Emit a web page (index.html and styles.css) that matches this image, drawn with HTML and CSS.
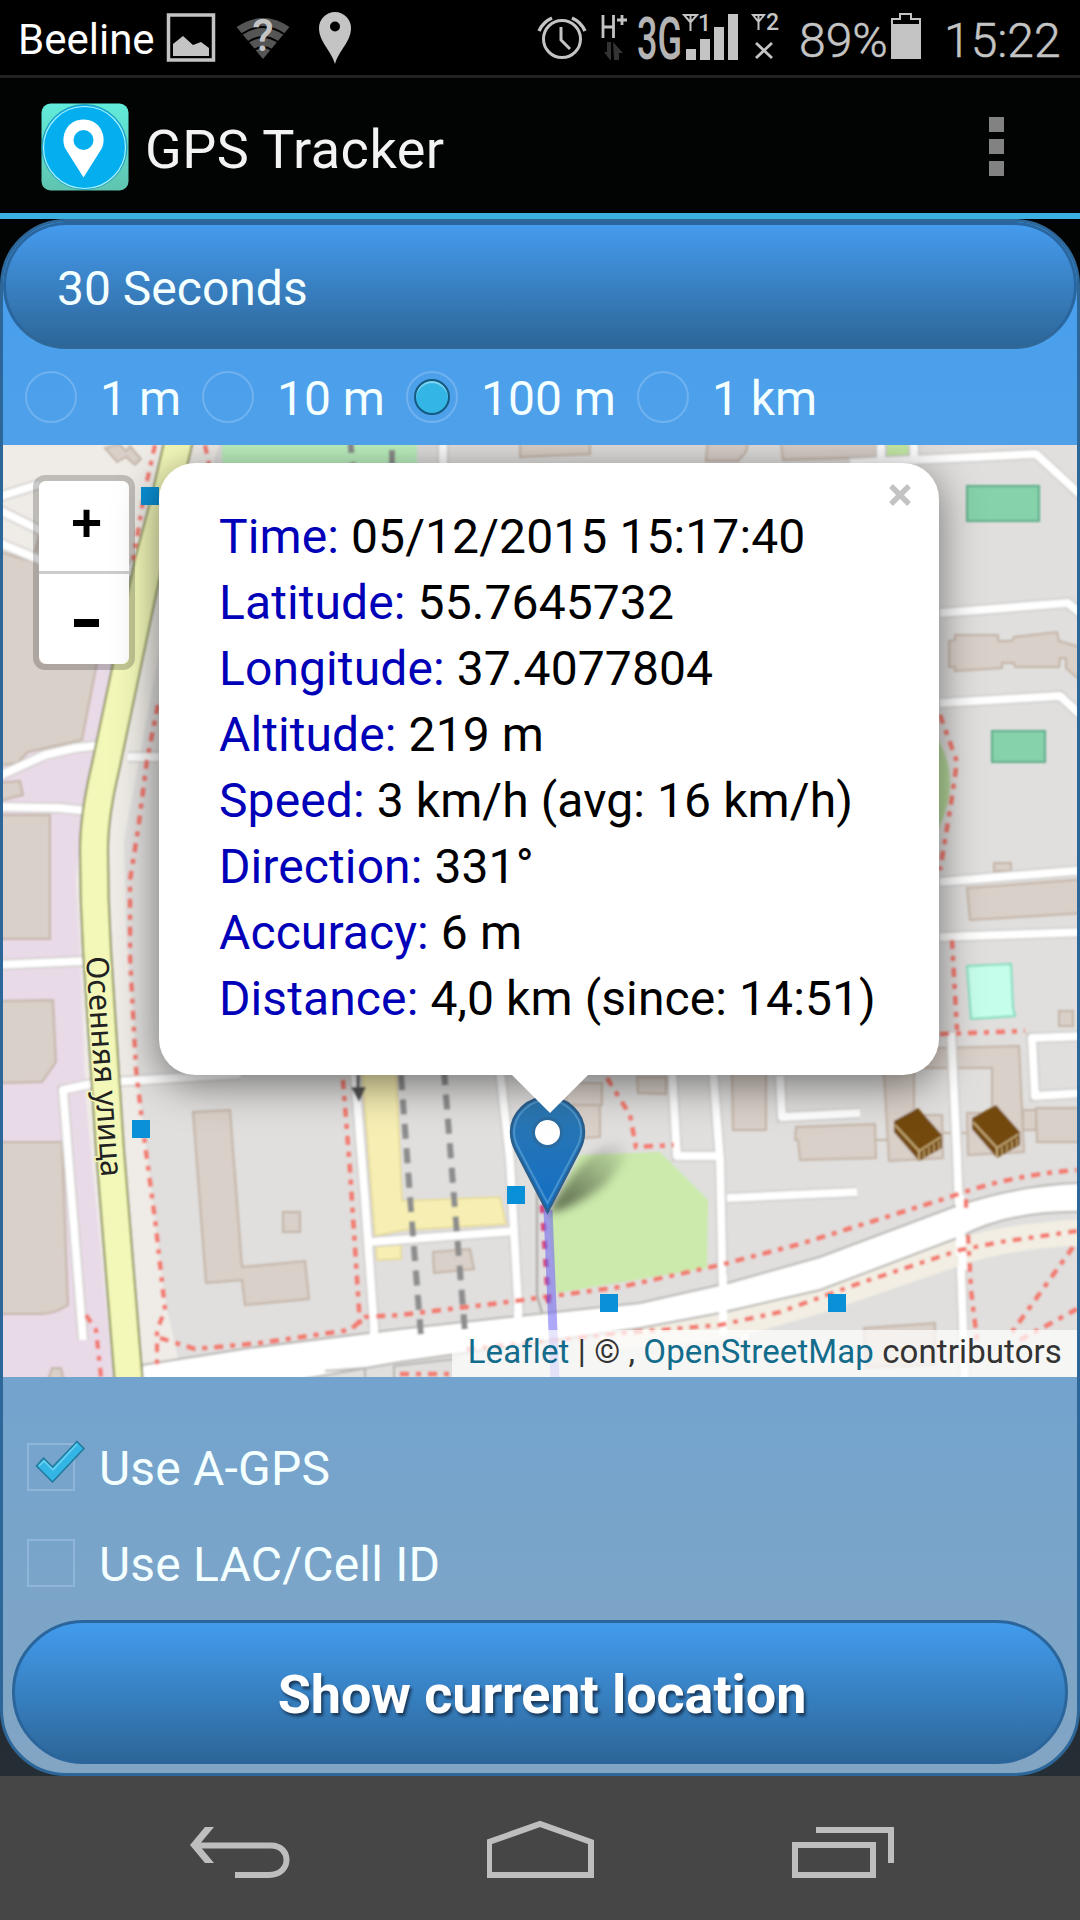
FILE: index.html
```html
<!DOCTYPE html>
<html lang="en">
<head>
    <meta charset="UTF-8">
    <meta name="viewport" content="width=device-width, initial-scale=1.0">
    <title>GPS Tracker</title>
    <link rel="stylesheet" href="styles.css">
</head>
<body>
    <!-- Status bar -->
    <div class="status-bar">
        <span class="carrier">Beeline</span>
        <svg class="status-left" width="200" height="75" viewBox="160 0 200 75">
            <rect x="168.5" y="15" width="45" height="45" fill="none" stroke="#c4c4c4" stroke-width="3.5"/>
            <path d="M173 56V44l10-8 10 9 8-3 8 6v8z" fill="#c4c4c4"/>
            <path d="M263 59L236.500 27Q263 9 289.500 27z" fill="#555"/>
            <path d="M242 34Q263 20 284 34M248 42Q263 32 278 42M254 50Q263 44 272 50" fill="none" stroke="#000" stroke-width="2"/>
            <text class="wifi-mark" x="263" y="51" text-anchor="middle">?</text>
            <path d="M335 64C331 50 319 42 319 28a16 16 0 0 1 32 0C351 42 339 50 335 64z" fill="#c4c4c4"/>
            <circle cx="335" cy="26.500" r="5" fill="#000"/>
        </svg>
        <svg class="status-right" width="260" height="75" viewBox="530 0 260 75">
            <g fill="none" stroke="#c4c4c4">
                <circle cx="562" cy="39" r="18.500" stroke-width="3"/>
                <path d="M561 27v13l9 9" stroke-width="3"/>
                <path d="M539 31Q543 22 552 18M585 31Q581 22 572 18" stroke-width="3.500"/>
                <path d="M603 15v23M613.500 15v23M603 27h10M617 20h10M622 15v10" stroke-width="2.800"/>
                <path d="M684 15h13l-6.500 7.500zM690.500 15v16M753 15h11l-5.500 7zM758.500 15v15" stroke-width="2"/>
                <path d="M756 43l16 15M772 43l-16 15" stroke-width="2.800"/>
            </g>
            <path d="M604 52h3V42h4v18h-1zM613 42l10 11h-4v7h-5z" fill="#333"/>
            <text class="net" transform="translate(637 59) scale(.6 1)">3G</text>
            <text class="sim" x="698" y="31">1</text>
            <text class="sim" x="766" y="30">2</text>
            <path d="M686 49h10v11h-10zM700 39h10v21h-10zM714 27h10v33h-10zM728 14h10v46h-10z" fill="#c4c4c4"/>
        </svg>
        <span class="battery-level">89%</span>
        <svg class="battery" width="31" height="75" viewBox="891 0 31 75">
            <path d="M892 58V19h8v-5h11v5h9v39z" fill="none" stroke="#c4c4c4" stroke-width="2"/>
            <path d="M891 24h30v35h-30z" fill="#c4c4c4"/>
        </svg>
        <span class="clock">15:22</span>
    </div>

    <!-- App header -->
    <div class="header">
        <svg class="logo" width="88" height="88" viewBox="0 0 88 88">
            <defs>
                <linearGradient id="logoBg" x1="0" y1="0" x2="0" y2="1">
                    <stop offset="0" stop-color="#62ecdb"/>
                    <stop offset="1" stop-color="#5fc4b0"/>
                </linearGradient>
            </defs>
            <rect x="0.500" y="0.500" width="87" height="87" rx="9" fill="url(#logoBg)"/>
            <circle cx="43.500" cy="44" r="42.500" fill="#05aeee" stroke="#2a9fb5" stroke-width="1"/>
            <circle cx="43.500" cy="44.500" r="41" fill="none" stroke="#a9f4ff" stroke-width="1.200"/>
            <path d="M42.500 74.500L24 45C19 33 26 16.500 42.500 16.500S66 33 61 45z" fill="#fff"/>
            <circle cx="42.500" cy="37" r="10" fill="#05aeee"/>
        </svg>
        <h1>GPS Tracker</h1>
        <div class="menu"><i></i><i></i><i></i></div>
    </div>

    <div class="page">
        <div class="select">30 Seconds</div>

        <div class="radios">
            <label><span class="radio"></span>1 m</label>
            <label><span class="radio"></span>10 m</label>
            <label><span class="radio checked"></span>100 m</label>
            <label><span class="radio"></span>1 km</label>
        </div>

        <div class="map">
            <svg class="tiles" width="1074" height="932" viewBox="3 445 1074 932">
                <defs>
                    <linearGradient id="pin" x1="0" y1="0" x2="0" y2="1">
                        <stop offset="0" stop-color="#2e77ae"/>
                        <stop offset="1" stop-color="#126fc6"/>
                    </linearGradient>
                    <linearGradient id="pinShadow" x1="0" y1="1" x2="1" y2="0">
                        <stop offset="0" stop-color="#000" stop-opacity=".6"/>
                        <stop offset="1" stop-color="#000" stop-opacity="0"/>
                    </linearGradient>
                    <filter id="soft" x="-50%" y="-50%" width="200%" height="200%"><feGaussianBlur stdDeviation="5"/></filter>
                    <filter id="upscale" x="0" y="0" width="100%" height="100%"><feGaussianBlur stdDeviation="1"/></filter>
                </defs>

                <rect x="3" y="445" width="1074" height="932" fill="#e0dfde"/>
                <g filter="url(#upscale)">
                <!-- land -->
                <path d="M-5 435H222L165 620 124 840 126 930 140 1100 165 1300 178 1358 142 1385H-5z" fill="#efece7"/>
                <path d="M-5 765L30 750 82 742 97 660H125L85 800 76 880 80 950 86 1100 114 1385H-5z" fill="#e9dae8"/>
                <path d="M222 435H417V470H222z" fill="#bdf1c0"/>
                <path d="M580 1155L660 1152 708 1200 707 1268 556 1293 549 1215z" fill="#cbeaab"/>
                <path d="M887 435h22v22h-22z" fill="#c5eaa5"/>
                <path d="M935 735Q965 780 935 835z" fill="#b5d79b"/>
                <path d="M362 1070H396L402 1201 500 1197 506 1224 404 1230 375 1236zM376 1245l25-1v15l-24 1z" fill="#f6eeb3" stroke="#e5d894" stroke-width="1.500"/>

                <!-- buildings -->
                <g fill="#d9d0c9" stroke="#c4b4a6" stroke-width="2">
                    <path d="M-5 550L33 562 40 530H97V663L82 740 28 752 17 763 -5 766z"/>
                    <path d="M-5 783l25-2 3 14-28 7zM-5 815H50V939H-5zM-5 1001l58-1 3 62-14 20-47 1zM-5 1142H62L68 1305Q55 1314 40 1314H-5z"/>
                    <path d="M105 448l14-4 7 7 4-5 11 13-6 6-9-8-9 5zM48 1380l4-12h9l3 12"/>
                    <path d="M193 1112L230 1110 242 1267 305 1261 309 1299 245 1305 242 1280 206 1283zM283 1212h17v20h-17z"/>
                    <path d="M433 1252l37-3 4 20-40 4zM566 1083h36v22h-36zM562 1105h38v32l-38 2zM637 1077h29v17l-28-1z"/>
                    <path d="M732 1070h34v60h-33zM796 1127l79-3 1 34-76 2-2-20h-3z"/>
                    <path d="M883 1056l57-8 79-2 5 106-56 3-1-42h25v-45h-78v47h28l1 43-54 3z"/>
                    <path d="M876 1140h12M943 1133h24M1023 1110h13v20h-13zM1036 1108h50v34h-49z"/>
                    <path d="M949 641l6-1v-5h43v6h14l2-4 43-5 2 9 28 8v37l-21-18v-10h-6l-1 9h-44l-1-4h-12v5l-47 3v-4h-6z"/>
                    <path d="M967 888l118-9v34l-115 7zM994 863h17v8h-17zM1059 1011h14v15h-14zM864 1328l71-5v42l-69 2z"/>
                    <path d="M520 435h70v19l-70 3zM708 435h42l-4 17-8 9h-32zM780 435h98v22l-95 3z"/>
                </g>

                <!-- minor roads -->
                <g fill="none" stroke="#cecbc8" stroke-width="11">
                    <path d="M-5 498L40 484M-5 508L50 535M-5 541L45 562M-5 778L45 755 75 748 105 745M-5 807L60 808 88 811M-5 965L85 961M240 1074L95 1083 63 1090 83 1340"/>
                    <path d="M128 757h32M125 575l12-13"/>
                    <path d="M355 1075L365 1200 375 1340M500 1070L510 1160 519 1320M672 1070L677 1156H718M713 1070L720 1160 723 1300M370 1242L515 1231M727 1198L857 1192M780 1076L782 1117 860 1113M951 1033L957 1153 965 1385M940 937L1085 932M1085 1036L1032 1038 1035 1096 1085 1093"/>
                    <path d="M850 463L1036 454 1085 499M881 435v28M914 435v28M940 613L1068 603 1085 617M940 703L1060 696 1085 719M940 882L1085 870M443 435v30M745 1310v30"/>
                </g>
                <g fill="none" stroke="#fff" stroke-width="8" stroke-linejoin="round">
                    <path d="M-5 498L40 484M-5 508L50 535M-5 541L45 562M-5 778L45 755 75 748 105 745M-5 807L60 808 88 811M-5 965L85 961M240 1074L95 1083 63 1090 83 1340"/>
                    <path d="M128 757h32M125 575l12-13"/>
                    <path d="M355 1075L365 1200 375 1340M500 1070L510 1160 519 1320M672 1070L677 1156H718M713 1070L720 1160 723 1300M370 1242L515 1231M727 1198L857 1192M780 1076L782 1117 860 1113M951 1033L957 1153 965 1385M940 937L1085 932M1085 1036L1032 1038 1035 1096 1085 1093"/>
                    <path d="M850 463L1036 454 1085 499M881 435v28M914 435v28M940 613L1068 603 1085 617M940 703L1060 696 1085 719M940 882L1085 870M443 435v30M745 1310v30"/>
                </g>
                <path d="M537 1060v235l5 18" fill="none" stroke="#aaa6a3" stroke-width="2"/>
                <path d="M358 1075v17" stroke="#555" stroke-width="3"/>
                <path d="M351 1087h15l-7 15z" fill="#555"/>

                <!-- main road -->
                <path d="M1085 1232Q1000 1237 960 1252L820 1300 730 1326 600 1338" fill="none" stroke="#f2eee3" stroke-width="26"/>
                <path d="M142 1365L250 1348 400 1329 500 1318 640 1303 728 1283 820 1257 953 1207Q1020 1184 1085 1183V1212Q1010 1210 960 1237L820 1290 720 1313 640 1328 400 1362 270 1385H142z" fill="#fff" stroke="#b8b6b2" stroke-width="2"/>
                <path d="M960 1195v60M723 1275v60M518 1305v20M374 1325v20M961 1230l2 40" stroke="#fff" stroke-width="8"/>
                <path d="M394 1385v-19l60-7M365 1385v-17l-40 3" fill="none" stroke="#b8b6b2" stroke-width="2"/>
                <path d="M180 435L165 500 148 565 106 765Q94 815 94 850Q94 900 97 950L110 1150 129 1385" fill="none" stroke="#848b4c" stroke-width="30"/>
                <path d="M180 435L165 500 148 565 106 765Q94 815 94 850Q94 900 97 950L110 1150 129 1385" fill="none" stroke="#f3f8b9" stroke-width="26"/>

                <!-- railway -->
                <path d="M401 1075L411 1210 421 1336M444 1070L455 1210 465 1332M350 438l3 30M392 450v30" fill="none" stroke="#8d8d8d" stroke-width="6" stroke-dasharray="15 9.500"/>

                <!-- footways -->
                <g fill="none" stroke="#f37a70" stroke-width="4.500" stroke-dasharray="9 7 5 7">
                    <path d="M155 445L145 490 133 560M205 445l5 25M158 705L147 760 138 830 130 880 130 960 136 1070 143 1130 155 1220 165 1310 157 1330V1365"/>
                    <path d="M160 1338L195 1349 260 1343 350 1330 365 1317 400 1315 500 1303 620 1287 720 1265 800 1244 950 1197Q1010 1175 1077 1170"/>
                    <path d="M343 1080L350 1170 360 1325M86 1315l10 15 5 47M607 1078L630 1115 636 1147 674 1145"/>
                    <path d="M1077 1231L1000 1242 960 1250 860 1283 780 1312 720 1325 600 1335 460 1350M400 1374h55"/>
                    <path d="M940 715L957 762 950 810 940 870M952 940L957 1030M940 1034L1025 1031M968 1235L971 1290 977 1340M1073 1247L1010 1335M1077 1309L1020 1340M966 1208v-15"/>
                </g>
                <path d="M542 1205L549 1312" fill="none" stroke="#d4477f" stroke-width="5" stroke-dasharray="8 10"/>

                <!-- fields -->
                <path d="M967 486h72v35h-72zM992 731h53v31h-53z" fill="#86d2ab" stroke="#5dab86" stroke-width="2"/>
                <path d="M967 966l44-2 2 44 2 8-44 3z" fill="#c6feec" stroke="#83dcbc" stroke-width="2"/>

                <g id="house">
                    <path d="M894 1121l24-13 24 27v13l-23 13-25-29z" fill="#734a08"/>
                    <path d="M895 1125l24 26v9M919 1151l22-14" fill="none" stroke="#c4ab78" stroke-width="2"/>
                    <path d="M924 1150v8M929 1147v8M934 1144v8M939 1141v8" stroke="#c4ab78" stroke-width="1.500"/>
                </g>
                <use href="#house" x="78" y="-3"/>
                </g>

                <!-- bus stops -->
                <path d="M141 487h18v18h-18zM132 1120h18v18h-18zM507 1186h18v18h-18zM600 1294h18v18h-18zM828 1294h18v18h-18z" fill="#0a90d6"/>

                <text class="street" transform="translate(86 957) rotate(86)" textLength="221" lengthAdjust="spacingAndGlyphs">Осенняя улица</text>

                <!-- track -->
                <path d="M548 1210L555 1380" fill="none" stroke="#6a60f0" stroke-opacity=".55" stroke-width="9"/>

                <!-- marker -->
                <path d="M548 1213Q580 1155 612 1142 645 1140 605 1185 575 1208 548 1213z" fill="url(#pinShadow)" filter="url(#soft)"/>
                <path d="M547.500 1212L516 1151Q511 1141 511 1132C511 1113 528 1097 547.500 1097S584 1113 584 1132Q584 1141 579 1151z" fill="url(#pin)" stroke="#2b5f8c" stroke-width="2.500"/>
                <path d="M547.500 1203L519 1149Q514 1140 514 1132C514 1115 530 1100 547.500 1100S581 1115 581 1132Q581 1140 576 1149z" fill="none" stroke="#5b9fd2" stroke-opacity=".7" stroke-width="2"/>
                <circle cx="547.500" cy="1132.500" r="14" fill="#fff" stroke="#2a6ca2" stroke-width="3"/>
            </svg>

            <div class="zoom-control">
                <a class="zoom-in">+</a>
                <a class="zoom-out"></a>
            </div>

            <div class="popup">
                <svg class="popup-close" width="22" height="22" viewBox="0 0 22 22"><path d="M2 2l18 18M20 2L2 20" stroke="#c3c3c3" stroke-width="5.500"/></svg>
                <div><b>Time:</b> 05/12/2015 15:17:40</div>
                <div><b>Latitude:</b> 55.7645732</div>
                <div><b>Longitude:</b> 37.4077804</div>
                <div><b>Altitude:</b> 219 m</div>
                <div><b>Speed:</b> 3 km/h (avg: 16 km/h)</div>
                <div><b>Direction:</b> 331°</div>
                <div><b>Accuracy:</b> 6 m</div>
                <div><b>Distance:</b> 4,0 km (since: 14:51)</div>
            </div>

            <div class="attribution"><a>Leaflet</a> | © , <a>OpenStreetMap</a> contributors</div>
        </div>

        <div class="checks">
            <label>
                <span class="check">
                    <svg width="52" height="46" viewBox="0 0 52 46">
                        <path d="M1.500 26l7-8 9 9L42 1.500l7 7L17.500 42z" fill="#33b5e5" stroke="#20789b" stroke-width="1.500"/>
                        <path d="M4 26l5-5 9 9L42 4" fill="none" stroke="#6fd2f2" stroke-width="1.500"/>
                    </svg>
                </span>
                <span class="check-text">Use A-GPS</span>
            </label>
            <label>
                <span class="check"></span>
                <span class="check-text">Use LAC/Cell ID</span>
            </label>
        </div>

        <button class="show-location">Show current location</button>
    </div>

    <!-- Navigation bar -->
    <div class="nav-bar">
        <svg width="100" height="60" viewBox="190 1820 100 60">
            <path d="M195 1845.500h76c21 0 21 29.500-2 29.500h-34" />
            <path class="fill" d="M190 1845l15-18h9l-15 18 15 18h-9z"/>
        </svg>
        <svg width="108" height="60" viewBox="487 1820 108 60">
            <path d="M489 1875v-33l51-18 51 18v33z"/>
        </svg>
        <svg width="102" height="60" viewBox="792 1820 102 60">
            <path d="M795 1845h78v30h-78zM816 1830h75v33"/>
        </svg>
    </div>
</body>
</html>
```
FILE: styles.css
```css
* {
    box-sizing: border-box;
}

body {
    margin: 0;
    width: 1080px;
    height: 1920px;
    overflow: hidden;
    font-family: Roboto, "Liberation Sans", sans-serif;
    font-size: 48px;
    background: linear-gradient(#000, #020403 240px, #262e35 1776px);
}

svg {
    display: block;
    flex: none;
}

/* Status bar */
.status-bar {
    display: flex;
    align-items: center;
    height: 78px;
    background: #000;
    border-bottom: 3px solid #222;
    color: #c4c4c4;
    white-space: nowrap;
}

.carrier {
    width: 142px;
    margin-left: 18px;
    margin-top: 3px;
    font-size: 42px;
    color: #fff;
}

.status-right {
    margin-left: 170px;
}

.battery-level {
    width: 92px;
    margin-left: 9px;
    margin-top: 5px;
    font-weight: 300;
    -webkit-text-stroke: 0.5px #c4c4c4;
}

.clock {
    margin-left: 22px;
    margin-top: 5px;
    font-weight: 300;
    -webkit-text-stroke: 0.5px #c4c4c4;
}

.wifi-mark {
    font-size: 44px;
    font-weight: 500;
    fill: #c4c4c4;
}

.net {
    font-size: 60px;
    font-weight: 500;
    fill: #b4b4b4;
}

.sim {
    font-size: 23px;
    font-weight: 500;
    fill: #c4c4c4;
}

/* Header */
.header {
    display: flex;
    align-items: center;
    height: 141px;
    padding: 0 76px 0 41px;
    border-bottom: 6px solid #3bb0e0;
    background: #020403;
}

.header h1 {
    flex: 1;
    margin: 7px 0 0 16px;
    font-size: 54px;
    font-weight: 400;
    letter-spacing: 0.5px;
    color: #f3f3f3;
}

.menu {
    display: flex;
    flex-direction: column;
    gap: 7px;
    margin-top: 2px;
}

.menu i {
    width: 15px;
    height: 15px;
    background: #828282;
}

.logo {
    margin-top: 2px;
}

/* Page */
.page {
    display: flex;
    flex-direction: column;
    height: 1557px;
    border: 3px solid #2d6699;
    border-radius: 66px;
    background: linear-gradient(#469fef, #82a5c3);
    overflow: hidden;
    color: #f4ffff;
}

.select {
    flex: none;
    height: 127px;
    padding: 0 51px;
    line-height: 128px;
    border: 3px solid #29669f;
    border-bottom-color: #2f6799;
    border-radius: 63px;
    background: linear-gradient(#459bee, #2d6698);
}

.radios {
    display: flex;
    flex: none;
    height: 96px;
    padding-left: 22px;
    gap: 21px;
}

.radios label {
    display: flex;
    align-items: center;
    gap: 23px;
    line-height: 99px;
    height: 99px;
    white-space: nowrap;
}

.radio {
    display: flex;
    width: 52px;
    height: 52px;
    margin-bottom: 3px;
    border: 2px solid #6fb2ef;
    border-radius: 50%;
}

.radio.checked::after {
    content: "";
    width: 32px;
    height: 32px;
    margin: auto;
    border: 2px solid #145a80;
    border-radius: 50%;
    background: #33b5e5;
    box-shadow: inset 0 2px 1px #85d8f3;
}

/* Map */
.map {
    position: relative;
    flex: none;
    height: 932px;
    overflow: hidden;
}

.street {
    font-family: "Noto Sans", sans-serif;
    font-size: 31px;
    fill: #222;
    stroke: #f3f8b9;
    stroke-width: 3px;
    paint-order: stroke;
}

.zoom-control {
    position: absolute;
    left: 30px;
    top: 30px;
    border: 6px solid rgba(0, 0, 0, 0.2);
    border-radius: 12px;
    background-clip: padding-box;
    color: #000;
}

.zoom-control a {
    display: flex;
    align-items: center;
    justify-content: center;
    width: 90px;
    height: 90px;
    background: #fff;
    font: bold 54px "Liberation Sans", sans-serif;
}

.zoom-control .zoom-in {
    height: 93px;
    padding: 0 0 8px 5px;
    border-bottom: 3px solid #ccc;
    border-radius: 8px 8px 0 0;
}

.zoom-control .zoom-out {
    border-radius: 0 0 8px 8px;
}

.zoom-out::after {
    content: "";
    width: 25px;
    height: 8px;
    margin: 8px 0 0 5px;
    background: #000;
}

.popup {
    position: absolute;
    left: 156px;
    top: 18px;
    width: 780px;
    height: 612px;
    padding: 41px 60px;
    border-radius: 36px;
    background: #fff;
    box-shadow: 0 9px 42px rgba(0, 0, 0, 0.5);
    color: #000;
    line-height: 66px;
    letter-spacing: 0.1px;
    white-space: nowrap;
}

.popup::after {
    content: "";
    position: absolute;
    left: 352px;
    top: 611px;
    border: 39px solid transparent;
    border-top-color: #fff;
    border-bottom: 0;
}

.popup b {
    font-weight: 400;
    color: #0000b8;
}

.popup-close {
    position: absolute;
    left: 730px;
    top: 21px;
}

.attribution {
    position: absolute;
    right: 0;
    bottom: 0;
    height: 47px;
    padding: 0 15px 0 16px;
    background: rgba(255, 255, 255, 0.7);
    color: #333;
    font-size: 33px;
    line-height: 44px;
    letter-spacing: 0.1px;
    white-space: nowrap;
}

.attribution a {
    color: #136c8b;
}

/* Options */
.checks {
    display: flex;
    flex-direction: column;
    gap: 48px;
    padding: 66px 0 33px 24px;
}

.checks label {
    display: flex;
    align-items: center;
    height: 48px;
    gap: 24px;
    line-height: 48px;
    white-space: nowrap;
}

.check {
    width: 48px;
    height: 48px;
    border: 2px solid #8fb5d8;
}

.check svg {
    margin: -5px 0 0 6px;
}

.check-text {
    padding-top: 4px;
    letter-spacing: 0.2px;
}

.show-location {
    flex: none;
    height: 144px;
    margin: 0 9px;
    padding: 4px 0 0 4px;
    border: 3px solid #2a659c;
    border-radius: 72px;
    background: linear-gradient(#429ced, #2d6698);
    color: #fff;
    font: bold 54px Roboto, "Liberation Sans", sans-serif;
    letter-spacing: -0.1px;
    text-shadow: 2px 3px 3px #1a3a5c;
}

/* Navigation bar */
.nav-bar {
    display: flex;
    height: 144px;
    padding: 44px 186px 0 190px;
    justify-content: space-between;
    background: #464646;
}

.nav-bar path {
    fill: none;
    stroke: #bebebe;
    stroke-width: 6;
}

.nav-bar .fill {
    fill: #bebebe;
    stroke: none;
}
```
